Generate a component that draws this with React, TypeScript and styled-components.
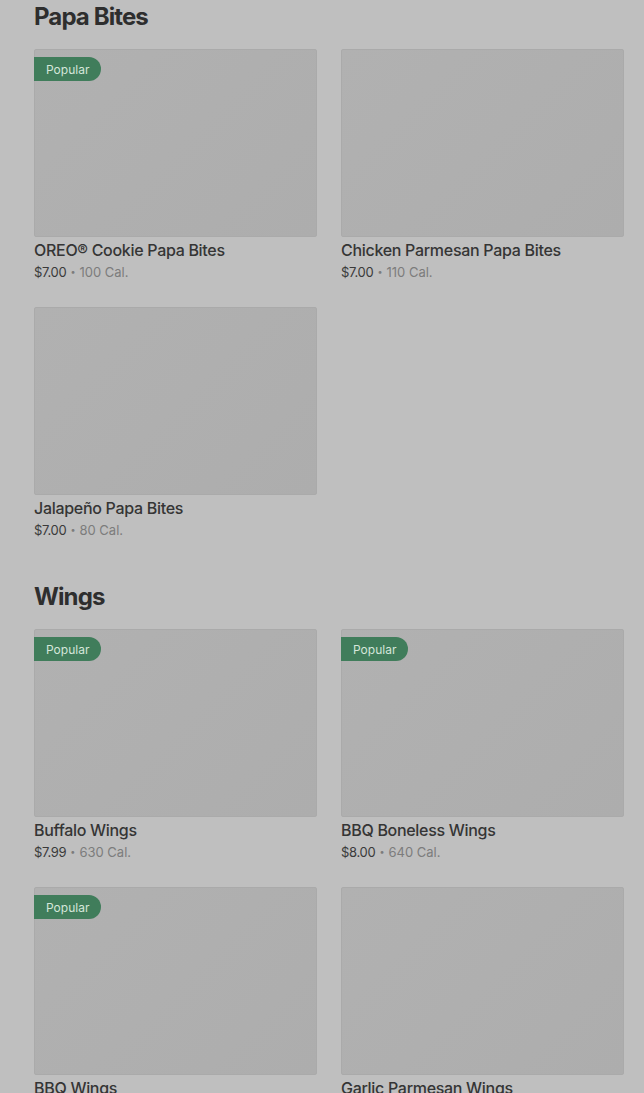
import * as React from 'react';
import styled, { createGlobalStyle } from 'styled-components';

type Item = {
	name: string;
	price: string;
	cal: string;
	popular?: boolean;
};

type Section = {
	title: string;
	items: Item[];
};

const sections: Section[] = [
	{
		title: 'Papa Bites',
		items: [
			{ name: 'OREO® Cookie Papa Bites', price: '$7.00', cal: '100 Cal.', popular: true },
			{ name: 'Chicken Parmesan Papa Bites', price: '$7.00', cal: '110 Cal.' },
			{ name: 'Jalapeño Papa Bites', price: '$7.00', cal: '80 Cal.' },
		],
	},
	{
		title: 'Wings',
		items: [
			{ name: 'Buffalo Wings', price: '$7.99', cal: '630 Cal.', popular: true },
			{ name: 'BBQ Boneless Wings', price: '$8.00', cal: '640 Cal.', popular: true },
			{ name: 'BBQ Wings', price: '$7.99', cal: '630 Cal.', popular: true },
			{ name: 'Garlic Parmesan Wings', price: '$7.99', cal: '650 Cal.' },
		],
	},
];

const App = () => {
	return (
		<>
			<GlobalStyle />
			<Page>
				{sections.map((section) => (
					<MenuSection key={section.title}>
						<SectionTitle>{section.title}</SectionTitle>
						<Grid>
							{section.items.map((item) => (
								<Card key={item.name}>
									<Thumb>{item.popular && <Badge>Popular</Badge>}</Thumb>
									<Name>{item.name}</Name>
									<Meta>
										<Price>{item.price}</Price>
										<Dot>•</Dot>
										<Cal>{item.cal}</Cal>
									</Meta>
								</Card>
							))}
						</Grid>
					</MenuSection>
				))}
			</Page>
		</>
	);
};

export default App;

const GlobalStyle = createGlobalStyle`
	html, body {
		margin: 0;
		padding: 0;
		background: #bfbfbf;
		font-family: Inter, "Noto Sans", sans-serif;
		color: #333333;
	}
`;

const Page = styled.div`
	height: 1093px;
	overflow: hidden;
	padding: 1px 20px 0 34px;
	display: flex;
	flex-direction: column;
	gap: 40px;
`;

const MenuSection = styled.section`
	display: flex;
	flex-direction: column;
`;

const SectionTitle = styled.h2`
	margin: 0 0 16px;
	font-size: 24px;
	line-height: 32px;
	font-weight: 700;
	letter-spacing: -0.9px;
	color: #2e2e2e;
`;

const Grid = styled.div`
	display: grid;
	grid-template-columns: 283px 283px;
	column-gap: 24px;
	row-gap: 24px;
`;

const Card = styled.div`
	display: flex;
	flex-direction: column;
`;

const Thumb = styled.div`
	position: relative;
	height: 188px;
	box-sizing: border-box;
	background: linear-gradient(135deg, #b1b1b1 0%, #adadad 100%);
	border: 1px solid #aaaaaa;
	border-radius: 2px;
	margin-bottom: 2px;
`;

const Badge = styled.span`
	position: absolute;
	top: 7px;
	left: -1px;
	height: 24px;
	padding: 0 12px 0 12px;
	display: flex;
	align-items: center;
	background: #407d5b;
	color: #d5e6da;
	font-size: 12px;
	border-radius: 0 12px 12px 0;
`;

const Name = styled.div`
	font-size: 16px;
	line-height: 22px;
	font-weight: 500;
	color: #353535;
	letter-spacing: -0.3px;
`;

const Meta = styled.div`
	display: flex;
	align-items: center;
	gap: 4px;
	font-size: 13px;
	line-height: 22px;
`;

const Price = styled.span`
	color: #3a3a3a;
	letter-spacing: -0.3px;
`;

const Dot = styled.span`
	color: #7c7c7c;
	font-size: 9px;
`;

const Cal = styled.span`
	color: #7c7c7c;
`;
